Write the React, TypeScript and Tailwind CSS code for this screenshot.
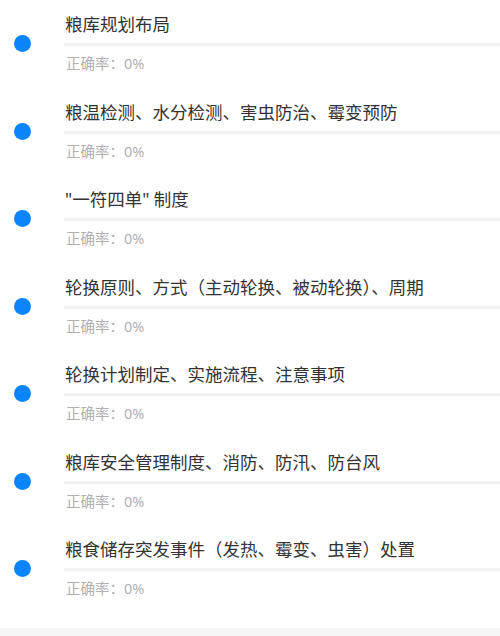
const items = [
  "粮库规划布局",
  "粮温检测、水分检测、害虫防治、霉变预防",
  "\"一符四单\" 制度",
  "轮换原则、方式（主动轮换、被动轮换）、周期",
  "轮换计划制定、实施流程、注意事项",
  "粮库安全管理制度、消防、防汛、防台风",
  "粮食储存突发事件（发热、霉变、虫害）处置",
];

export default function App() {
  return (
    <div
      className="w-[500px] h-[636px] bg-[#f5f5f5] overflow-hidden"
      style={{ fontFamily: '"Noto Sans", "Noto Sans CJK SC", sans-serif' }}
    >
      <div className="bg-white pb-[15.5px]">
        {items.map((t, i) => (
          <div key={i} className="flex h-[87.5px] items-center">
            <div className="w-[64px] shrink-0 flex items-center">
              <div className="ml-[14px] w-[17px] h-[17px] rounded-full bg-[#0a84ff]" />
            </div>
            <div className="flex-1 h-full pt-[12px]">
              <div className="h-[25px] leading-[25px] text-[17.5px] text-[#333] whitespace-nowrap pl-px">
                {t}
              </div>
              <div className="mt-[6px] h-[3px] bg-[#f2f2f2]" />
              <div className="mt-[7px] h-[20px] leading-[20px] text-[14.5px] text-[#b0b0b0] pl-[2px]">
                正确率：0%
              </div>
            </div>
          </div>
        ))}
      </div>
    </div>
  );
}
